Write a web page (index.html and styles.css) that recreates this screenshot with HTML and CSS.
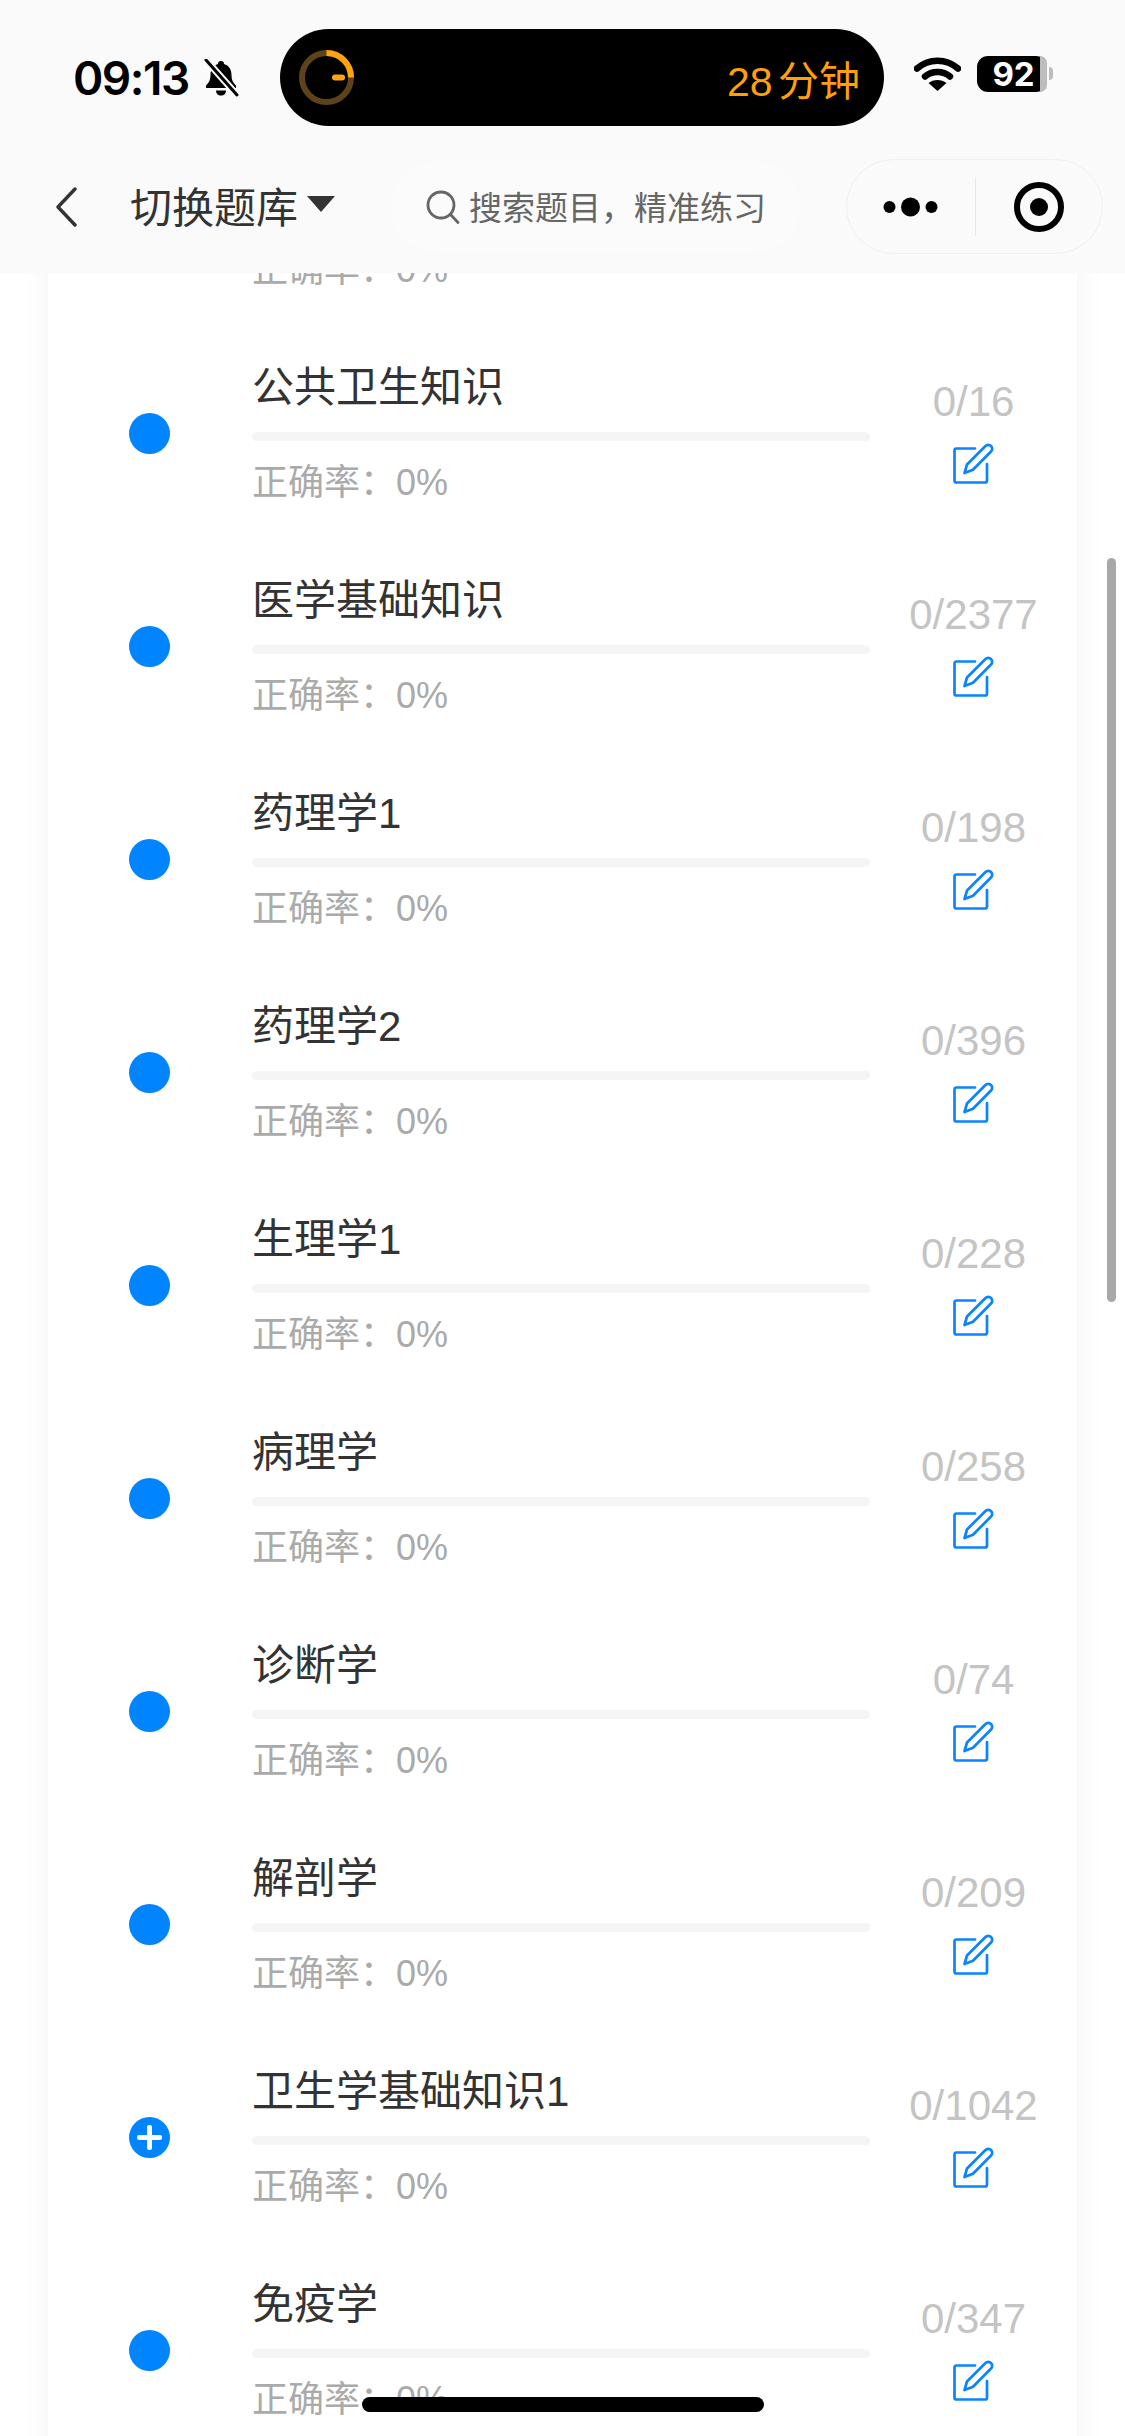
FILE: index.html
```html
<!DOCTYPE html>
<html lang="zh-CN">
  <head>
    <meta charset="UTF-8" />
    <meta name="viewport" content="width=device-width, initial-scale=1.0" />
    <title>切换题库</title>
    <link rel="stylesheet" href="styles.css">
  </head>
  <body>
    <div class="phone">
      <header class="topBar">
        <div class="statusRow">
          <span class="time">09:13</span>
          <svg class="bell" viewBox="0 0 36 38">
            <path d="M18 2c-2 0-3 1.300-3 3-5 1.500-7.500 5.500-7.500 11 0 5-1.500 7.500-4.500 10.500v2.500h30v-2.500c-3-3-4.500-5.500-4.500-10.500 0-5.500-2.500-9.500-7.500-11 0-1.700-1-3-3-3z" fill="#000"/>
            <path d="M13 31.500h10c0 3-2 5-5 5s-5-2-5-5z" fill="#000"/>
            <path d="M3 1l31 35" stroke="#fafafa" stroke-width="7"/>
            <path d="M3 1l31 35" stroke="#000" stroke-width="3" stroke-linecap="round"/>
          </svg>
          <div class="island">
            <svg class="timer" viewBox="0 0 55 55">
              <circle cx="27.500" cy="27.500" r="24.500" fill="none" stroke="#5e431a" stroke-width="6"/>
              <path d="M27.500 3a24.500 24.500 0 0 1 24.500 24.500" fill="none" stroke="#ffa30f" stroke-width="6"/>
              <rect x="33" y="24.500" width="13" height="6" rx="3" fill="#ffa30f"/>
            </svg>
            <span class="islandText">28 分钟</span>
          </div>
          <svg class="wifi" viewBox="0 0 47 34">
            <path d="M3 11.500c11.500-10.500 29.500-10.500 41 0" fill="none" stroke="#000" stroke-width="6.500" stroke-linecap="round"/>
            <path d="M11 19.500c7-6 18-6 25 0" fill="none" stroke="#000" stroke-width="6.500" stroke-linecap="round"/>
            <path d="M23.500 34l-9-8c5-4 13-4 18 0z" fill="#000"/>
          </svg>
          <div class="battery">
            <span class="batteryLevel">92</span>
            <span class="batteryEnd"></span>
          </div>
          <span class="batteryNub"></span>
        </div>
        <div class="navRow">
          <svg class="back" viewBox="0 0 24 40">
            <path d="M21 2L4 20l17 18" fill="none" stroke="#333" stroke-width="3.400" stroke-linecap="round" stroke-linejoin="round"/>
          </svg>
          <span class="navTitle">切换题库</span>
          <span class="caret"></span>
          <div class="search">
            <svg class="searchIcon" viewBox="0 0 34 34">
              <circle cx="15" cy="15" r="13" fill="none" stroke="#666" stroke-width="2.800"/>
              <path d="M24.500 24.500l7.500 8" stroke="#666" stroke-width="2.800" stroke-linecap="round"/>
            </svg>
            <span class="searchText">搜索题目，精准练习</span>
          </div>
          <div class="capsule">
            <svg class="more" viewBox="0 0 55 20">
              <circle cx="6.500" cy="10" r="6" fill="#000"/>
              <circle cx="27.500" cy="10" r="9.500" fill="#000"/>
              <circle cx="48.500" cy="10" r="6" fill="#000"/>
            </svg>
            <span class="capsuleLine"></span>
            <svg class="target" viewBox="0 0 50 50">
              <circle cx="25" cy="25" r="22" fill="none" stroke="#000" stroke-width="6"/>
              <circle cx="25" cy="25" r="9" fill="#000"/>
            </svg>
          </div>
        </div>
      </header>

      <main class="scrollArea">
        <div class="card">
          <div class="row">
            <span class="dot"></span>
            <div class="rowMain">
              <div class="rowTitle"></div>
              <div class="bar"></div>
              <div class="rowRate">正确率：0%</div>
            </div>
            <div class="rowSide">
              <div class="count"></div>
            </div>
          </div>

          <div class="row">
            <span class="dot"></span>
            <div class="rowMain">
              <div class="rowTitle">公共卫生知识</div>
              <div class="bar"></div>
              <div class="rowRate">正确率：0%</div>
            </div>
            <div class="rowSide">
              <div class="count">0/16</div>
              <svg class="edit" viewBox="0 0 42 42"><use href="#editIcon"/></svg>
            </div>
          </div>

          <div class="row">
            <span class="dot"></span>
            <div class="rowMain">
              <div class="rowTitle">医学基础知识</div>
              <div class="bar"></div>
              <div class="rowRate">正确率：0%</div>
            </div>
            <div class="rowSide">
              <div class="count">0/2377</div>
              <svg class="edit" viewBox="0 0 42 42"><use href="#editIcon"/></svg>
            </div>
          </div>

          <div class="row">
            <span class="dot"></span>
            <div class="rowMain">
              <div class="rowTitle">药理学1</div>
              <div class="bar"></div>
              <div class="rowRate">正确率：0%</div>
            </div>
            <div class="rowSide">
              <div class="count">0/198</div>
              <svg class="edit" viewBox="0 0 42 42"><use href="#editIcon"/></svg>
            </div>
          </div>

          <div class="row">
            <span class="dot"></span>
            <div class="rowMain">
              <div class="rowTitle">药理学2</div>
              <div class="bar"></div>
              <div class="rowRate">正确率：0%</div>
            </div>
            <div class="rowSide">
              <div class="count">0/396</div>
              <svg class="edit" viewBox="0 0 42 42"><use href="#editIcon"/></svg>
            </div>
          </div>

          <div class="row">
            <span class="dot"></span>
            <div class="rowMain">
              <div class="rowTitle">生理学1</div>
              <div class="bar"></div>
              <div class="rowRate">正确率：0%</div>
            </div>
            <div class="rowSide">
              <div class="count">0/228</div>
              <svg class="edit" viewBox="0 0 42 42"><use href="#editIcon"/></svg>
            </div>
          </div>

          <div class="row">
            <span class="dot"></span>
            <div class="rowMain">
              <div class="rowTitle">病理学</div>
              <div class="bar"></div>
              <div class="rowRate">正确率：0%</div>
            </div>
            <div class="rowSide">
              <div class="count">0/258</div>
              <svg class="edit" viewBox="0 0 42 42"><use href="#editIcon"/></svg>
            </div>
          </div>

          <div class="row">
            <span class="dot"></span>
            <div class="rowMain">
              <div class="rowTitle">诊断学</div>
              <div class="bar"></div>
              <div class="rowRate">正确率：0%</div>
            </div>
            <div class="rowSide">
              <div class="count">0/74</div>
              <svg class="edit" viewBox="0 0 42 42"><use href="#editIcon"/></svg>
            </div>
          </div>

          <div class="row">
            <span class="dot"></span>
            <div class="rowMain">
              <div class="rowTitle">解剖学</div>
              <div class="bar"></div>
              <div class="rowRate">正确率：0%</div>
            </div>
            <div class="rowSide">
              <div class="count">0/209</div>
              <svg class="edit" viewBox="0 0 42 42"><use href="#editIcon"/></svg>
            </div>
          </div>

          <div class="row">
            <span class="dot dotPlus"></span>
            <div class="rowMain">
              <div class="rowTitle">卫生学基础知识1</div>
              <div class="bar"></div>
              <div class="rowRate">正确率：0%</div>
            </div>
            <div class="rowSide">
              <div class="count">0/1042</div>
              <svg class="edit" viewBox="0 0 42 42"><use href="#editIcon"/></svg>
            </div>
          </div>

          <div class="row">
            <span class="dot"></span>
            <div class="rowMain">
              <div class="rowTitle">免疫学</div>
              <div class="bar"></div>
              <div class="rowRate">正确率：0%</div>
            </div>
            <div class="rowSide">
              <div class="count">0/347</div>
              <svg class="edit" viewBox="0 0 42 42"><use href="#editIcon"/></svg>
            </div>
          </div>
        </div>
      </main>

      <div class="scrollThumb"></div>
      <div class="homeBar"></div>
    </div>

    <svg class="iconDefs" width="0" height="0">
      <symbol id="editIcon" viewBox="0 0 42 42">
        <path d="M22 6.500H3.500a2 2 0 0 0-2 2v30a2 2 0 0 0 2 2h28.500a2 2 0 0 0 2-2V22" fill="none" stroke="#0a84ff" stroke-width="2.700" stroke-linecap="round"/>
        <path d="M11.500 31l2.500-8.500L32.500 4a3.800 3.800 0 0 1 5.500 0 3.800 3.800 0 0 1 0 5.500L20 27.800z" fill="none" stroke="#0a84ff" stroke-width="2.700" stroke-linejoin="round"/>
      </symbol>
    </svg>
  </body>
</html>
```

FILE: styles.css
```css
* {
  box-sizing: border-box;
}
body {
  margin: 0;
  padding: 0;
  background-color: #fff;
  font-family: "Liberation Sans", "Noto Sans CJK SC", sans-serif;
}
.phone {
  position: relative;
  width: 1125px;
  height: 2436px;
  overflow: hidden;
  display: flex;
  flex-direction: column;
}
.iconDefs {
  position: absolute;
}

/* top bar */
.topBar {
  position: relative;
  z-index: 2;
  height: 273px;
  flex-shrink: 0;
  padding-top: 29px;
  background-color: #fafafa;
}
.statusRow {
  display: flex;
  align-items: center;
  height: 97px;
  padding-left: 73px;
}
.time {
  width: 116px;
  font-family: Inter, "Liberation Sans", sans-serif;
  font-size: 46px;
  font-weight: 600;
  letter-spacing: -1.500px;
  color: #000;
  white-space: nowrap;
}
.bell {
  width: 36px;
  height: 38px;
  margin-left: 14px;
}
.island {
  display: flex;
  align-items: center;
  justify-content: space-between;
  width: 604px;
  height: 97px;
  margin-left: 41px;
  padding: 0 24px 0 19px;
  border-radius: 49px;
  background-color: #000;
}
.timer {
  width: 55px;
  height: 55px;
}
.islandText {
  font-size: 41px;
  word-spacing: -6px;
  color: #ff9f0a;
}
.wifi {
  width: 47px;
  height: 34px;
  margin-left: 30px;
  margin-top: -8px;
}
.battery {
  display: flex;
  align-items: stretch;
  width: 70px;
  height: 36px;
  margin-left: 16px;
  margin-top: -8px;
  border-radius: 11px;
  background-color: #000;
}
.batteryLevel {
  width: 63px;
  padding-left: 10px;
  font-family: Inter, "Liberation Sans", sans-serif;
  font-size: 33px;
  font-weight: 700;
  line-height: 36px;
  text-align: center;
  color: #fff;
}
.batteryEnd {
  width: 7px;
  border-radius: 0 11px 11px 0;
  background-color: #bdbdbd;
}
.batteryNub {
  width: 4px;
  height: 13px;
  margin-left: 2px;
  margin-top: -8px;
  border-radius: 0 7px 7px 0;
  background-color: #bdbdbd;
}
.navRow {
  display: flex;
  align-items: center;
  height: 95px;
  margin-top: 33px;
  padding-left: 54px;
}
.back {
  width: 24px;
  height: 40px;
}
.navTitle {
  width: 168px;
  margin-left: 52px;
  margin-top: -5px;
  font-size: 42px;
  color: #333;
  white-space: nowrap;
}
.caret {
  width: 0;
  height: 0;
  margin-left: 9px;
  margin-top: -6px;
  border-left: 14px solid transparent;
  border-right: 14px solid transparent;
  border-top: 16px solid #333;
}
.search {
  display: flex;
  align-items: center;
  width: 409px;
  height: 90px;
  margin-left: 56px;
  padding-left: 35px;
  border-radius: 45px;
  background-color: #fbfbfb;
}
.searchIcon {
  width: 34px;
  height: 34px;
}
.searchText {
  margin-left: 9px;
  margin-top: -2px;
  font-size: 33px;
  color: #666;
  white-space: nowrap;
}
.capsule {
  display: flex;
  align-items: center;
  width: 257px;
  height: 95px;
  margin-left: 46px;
  padding-left: 36px;
  border: 1.500px solid #efefef;
  border-radius: 48px;
}
.more {
  width: 55px;
  height: 20px;
}
.capsuleLine {
  width: 1px;
  height: 59px;
  margin-left: 37px;
  background-color: #e8e8e8;
}
.target {
  width: 50px;
  height: 50px;
  margin-left: 38px;
}

/* list */
.scrollArea {
  flex: 1;
  overflow: hidden;
  padding: 0 48px;
}
.card {
  margin-top: -159px;
  height: 2500px;
  background-color: #fff;
  box-shadow: 0 0 30px rgba(0, 0, 0, 0.05);
}
.row {
  display: flex;
  align-items: center;
  height: 213px;
  padding-left: 81px;
}
.dot {
  position: relative;
  width: 41px;
  height: 41px;
  flex-shrink: 0;
  border-radius: 50%;
  background-color: #0084ff;
}
.dotPlus::before,
.dotPlus::after {
  content: "";
  position: absolute;
  left: 50%;
  top: 50%;
  background-color: #fff;
  border-radius: 2px;
}
.dotPlus::before {
  width: 25px;
  height: 5px;
  margin: -2.500px 0 0 -12.500px;
}
.dotPlus::after {
  width: 5px;
  height: 25px;
  margin: -12.500px 0 0 -2.500px;
}
.rowMain {
  width: 618px;
  margin-left: 82px;
  padding-top: 2px;
  flex-shrink: 0;
}
.rowTitle {
  height: 58px;
  font-size: 42px;
  line-height: 60px;
  color: #333;
  white-space: nowrap;
}
.bar {
  height: 9px;
  margin-top: 16px;
  border-radius: 5px;
  background-color: #f5f5f5;
}
.rowRate {
  height: 56px;
  margin-top: 14px;
  font-size: 36px;
  line-height: 56px;
  color: #aaa;
  white-space: nowrap;
}
.rowSide {
  display: flex;
  flex-direction: column;
  align-items: center;
  width: 207px;
  padding-bottom: 6px;
}
.count {
  height: 50px;
  font-size: 42px;
  line-height: 50px;
  color: #c4c4c4;
  white-space: nowrap;
}
.edit {
  width: 42px;
  height: 42px;
  margin-top: 15px;
}

/* overlays */
.scrollThumb {
  position: absolute;
  left: 1107px;
  top: 558px;
  width: 9px;
  height: 744px;
  border-radius: 5px;
  background-color: #a8a8a8;
}
.homeBar {
  position: absolute;
  left: 362px;
  top: 2397px;
  width: 402px;
  height: 15px;
  border-radius: 8px;
  background-color: #000;
}
```
